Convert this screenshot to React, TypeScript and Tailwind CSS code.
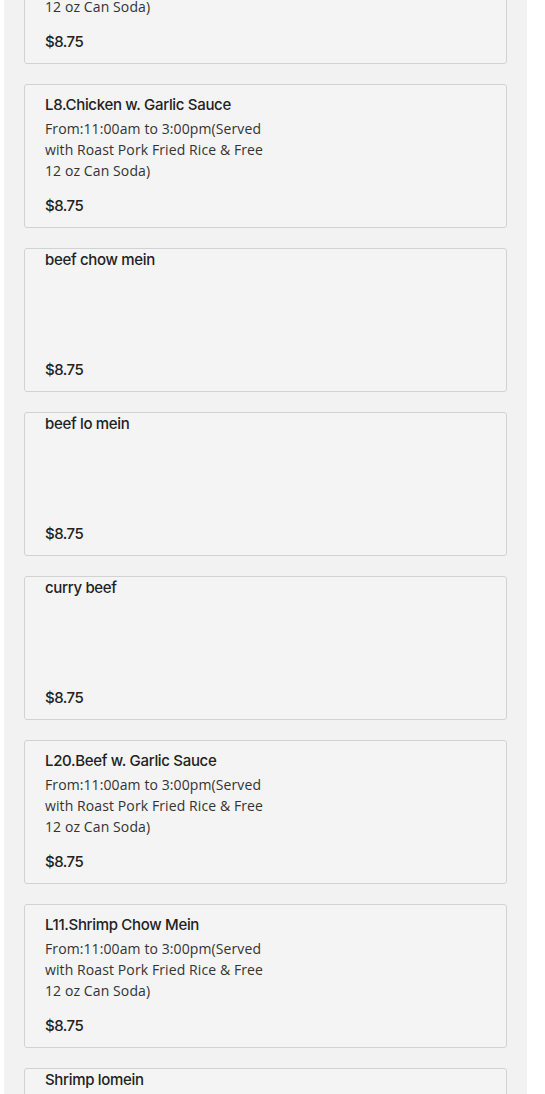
import React from "react";

type Item = { name: string; desc?: string; price: string };

const DESC = "From:11:00am to 3:00pm(Served with Roast Pork Fried Rice & Free 12 oz Can Soda)";

const items: Item[] = [
  { name: "L7.Chicken w. Broccoli", desc: DESC, price: "$8.75" },
  { name: "L8.Chicken w. Garlic Sauce", desc: DESC, price: "$8.75" },
  { name: "beef chow mein", price: "$8.75" },
  { name: "beef lo mein", price: "$8.75" },
  { name: "curry beef", price: "$8.75" },
  { name: "L20.Beef w. Garlic Sauce", desc: DESC, price: "$8.75" },
  { name: "L11.Shrimp Chow Mein", desc: DESC, price: "$8.75" },
  { name: "Shrimp lomein", price: "$8.75" },
];

function Card({ item }: { item: Item }) {
  return (
    <div className="flex h-[144px] shrink-0 flex-col rounded-[3px] border border-[#d2d2d2] bg-[#f4f4f4] px-[20px] pb-[11px]">
      <div className={item.desc ? "pt-[10px]" : "pt-[1px]"}>
        <div
          className="text-[15px] leading-[20px] font-medium tracking-[-0.32px] text-[#222]"
          style={{ fontFamily: "Inter, 'Noto Sans', sans-serif" }}
        >
          {item.name}
        </div>
        {item.desc && (
          <div
            className="mt-[3px] w-[224px] text-[14px] leading-[21px] tracking-[0.1px] text-[#333]"
            style={{ fontFamily: "'Open Sans', sans-serif" }}
          >
            {item.desc}
          </div>
        )}
      </div>
      <div
        className="mt-auto text-[15px] leading-[20px] font-medium tracking-[-0.5px] text-[#222]"
        style={{ fontFamily: "Inter, 'Noto Sans', sans-serif" }}
      >
        {item.price}
      </div>
    </div>
  );
}

export default function App() {
  return (
    <div className="h-[1094px] overflow-hidden bg-white">
      <div className="ml-[4px] w-[523px] bg-[#f2f2f2] px-[20px] pb-[20px]">
        <div className="-mt-[80px] flex flex-col gap-[20px]">
          {items.map((it, i) => (
            <Card key={i} item={it} />
          ))}
        </div>
      </div>
    </div>
  );
}
